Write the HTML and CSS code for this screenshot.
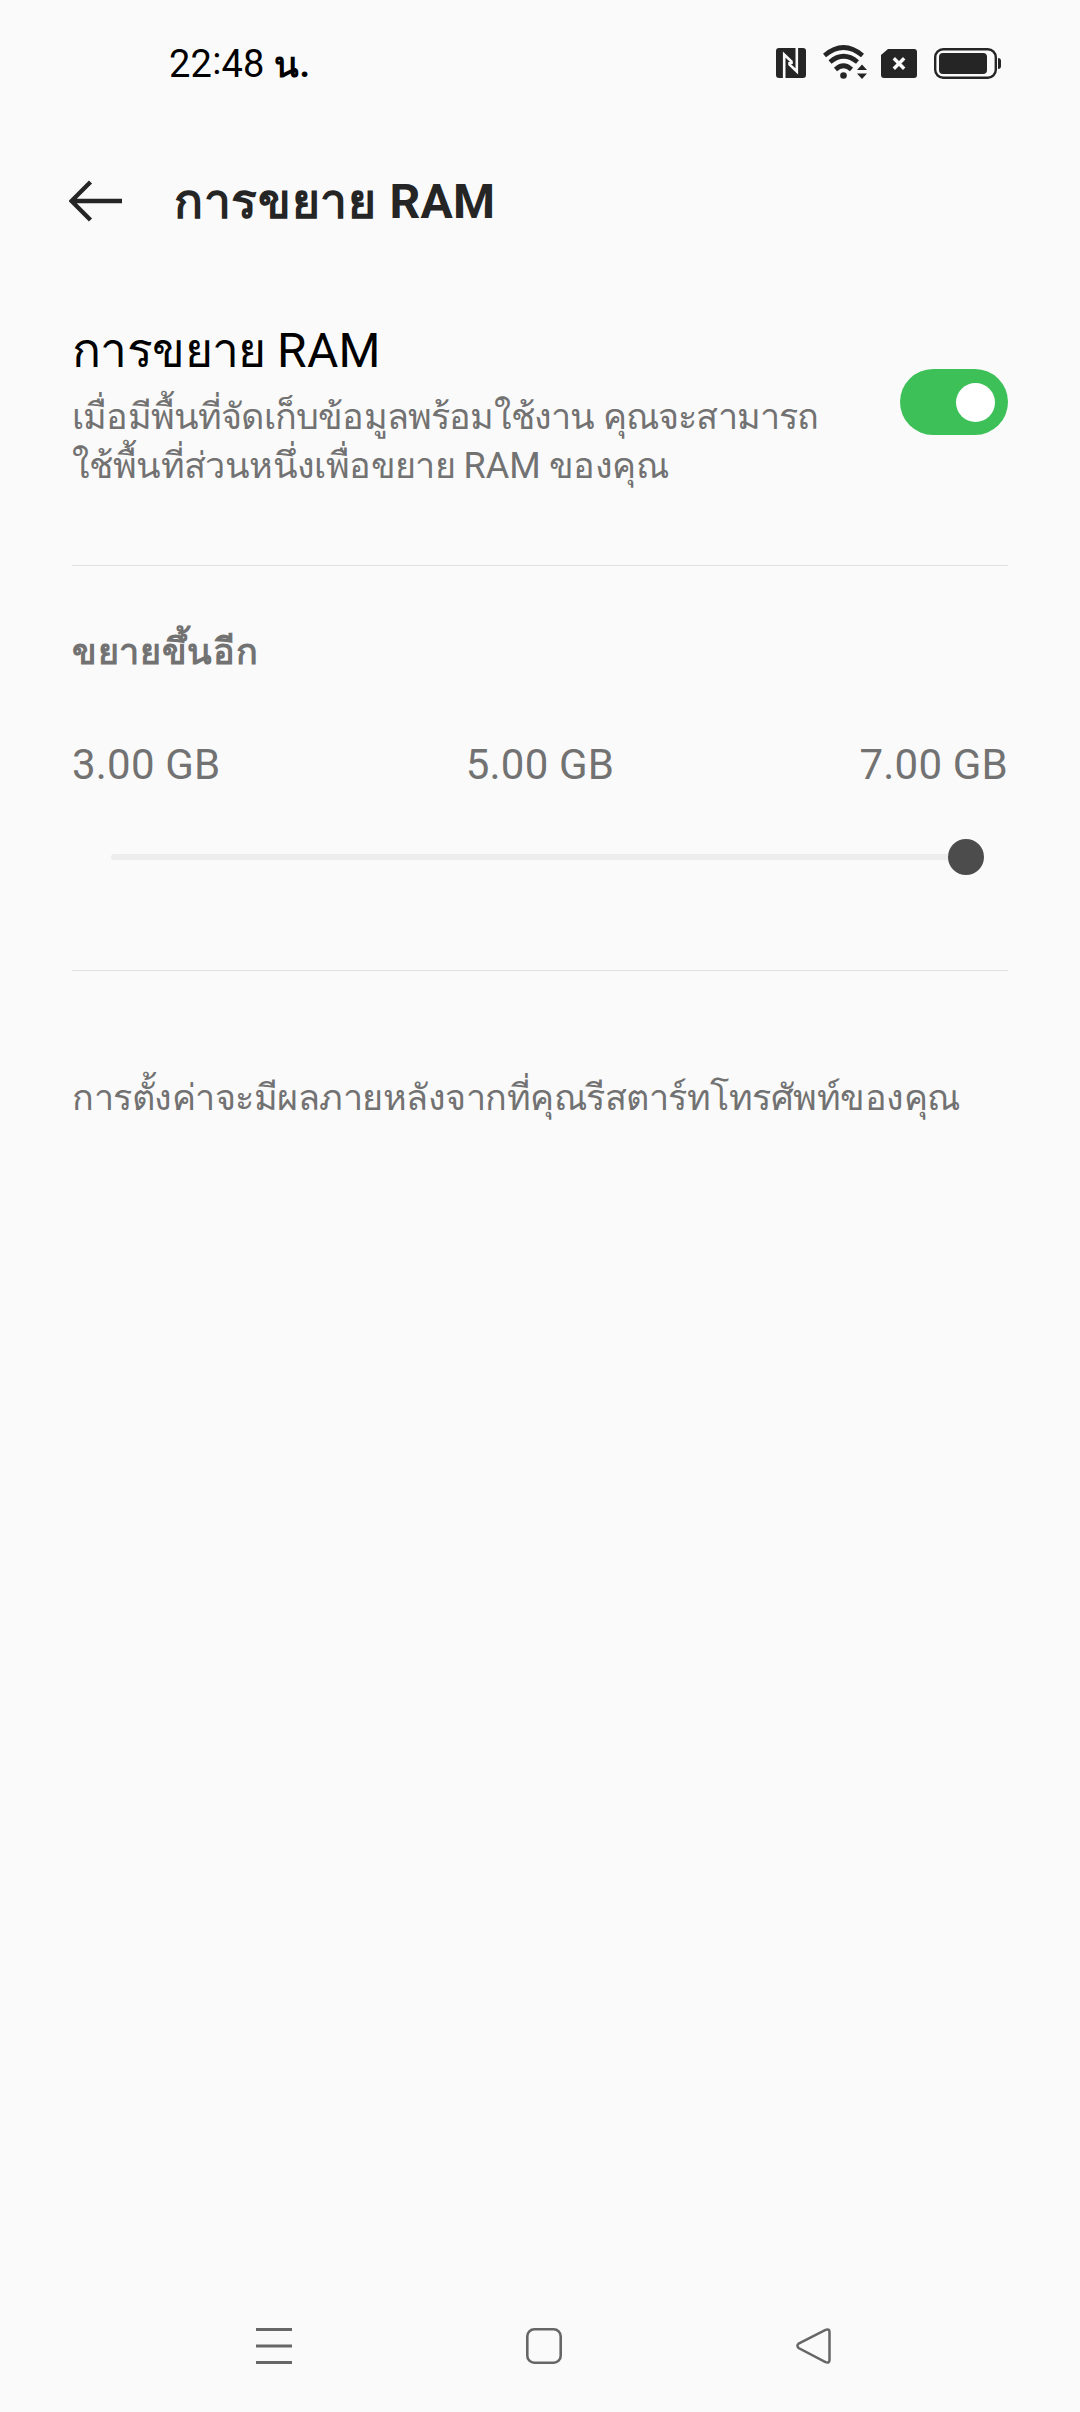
FILE: index.html
```html
<!DOCTYPE html>
<html lang="th">
<head>
  <meta charset="UTF-8">
  <meta name="viewport" content="width=device-width, initial-scale=1.0">
  <title>การขยาย RAM</title>
  <link rel="stylesheet" href="styles.css">
</head>
<body>
  <!-- Status bar -->
  <div class="status-bar">
    <div class="time">22<span class="colon">:</span>48 <span class="unit">น.</span></div>
    <div class="status-icons">
      <svg class="nfc" width="30" height="30" viewBox="0 0 30 30">
        <rect width="30" height="30" rx="3" fill="#252525"/>
        <path d="M8.200 30V6.500L15.500 13.500V16M20.800 0V23.500L13.500 16.500V14" fill="none" stroke="#fafafa" stroke-width="2.600"/>
      </svg>
      <svg class="wifi" width="44" height="34" viewBox="0 0 44 34">
        <g fill="none" stroke="#252525" stroke-width="4.600">
          <path d="M1.500 10.500Q20.500 -5.500 39.500 10.500"/>
          <path d="M7 17Q20.500 5.500 34.500 17"/>
          <path d="M12.500 24.500Q20.500 17 28.500 24.500"/>
        </g>
        <circle cx="20.500" cy="30.500" r="3.300" fill="#252525"/>
        <path d="M34 25L39 19.500L44 25ZM34 28.500H44L39 34Z" fill="#252525"/>
      </svg>
      <svg class="sim" width="36" height="29" viewBox="0 0 36 29">
        <path d="M7 0H33Q36 0 36 3V26Q36 29 33 29H3Q0 29 0 26V6Z" fill="#252525"/>
        <path d="M12.800 9.300L23.200 19.700M23.200 9.300L12.800 19.700" stroke="#fafafa" stroke-width="3.400"/>
      </svg>
      <svg class="battery" width="67" height="31" viewBox="0 0 67 31">
        <rect x="1.200" y="1.200" width="60.600" height="28.600" rx="8" fill="none" stroke="#252525" stroke-width="2.400"/>
        <rect x="5" y="5" width="48" height="21" rx="4" fill="#252525"/>
        <path d="M64 10Q67 10 67 13V18Q67 21 64 21Z" fill="#252525"/>
      </svg>
    </div>
  </div>

  <!-- Header -->
  <div class="header">
    <svg class="back" width="54" height="42" viewBox="0 0 54 42">
      <path d="M3 21H53M21.500 2L2.500 21L21.500 40" fill="none" stroke="#252525" stroke-width="4.400"/>
    </svg>
    <h1>การขยาย <span class="latin">RAM</span></h1>
  </div>

  <div class="content">
    <div class="setting">
      <div class="setting-text">
        <h2>การขยาย <span class="latin">RAM</span></h2>
        <p class="tight">เมื่อมีพื้นที่จัดเก็บข้อมูลพร้อมใช้งาน คุณจะสามารถ</p>
        <p>ใช้พื้นที่ส่วนหนึ่งเพื่อขยาย <span class="latin">RAM</span> ของคุณ</p>
      </div>
      <div class="toggle"><div class="knob"></div></div>
    </div>

    <div class="expand">
      <h3>ขยายขึ้นอีก</h3>
      <div class="labels">
        <span>3.00 GB</span>
        <span>5.00 GB</span>
        <span>7.00 GB</span>
      </div>
      <div class="slider">
        <div class="track"></div>
        <div class="thumb"></div>
      </div>
    </div>

    <p class="note">การตั้งค่าจะมีผลภายหลังจากที่คุณรีสตาร์ทโทรศัพท์ของคุณ</p>
  </div>

  <!-- Navigation bar -->
  <div class="nav-bar">
    <svg width="36" height="36" viewBox="0 0 36 36">
      <path d="M0 1.500H36M0 18H36M0 34.500H36" stroke="#666" stroke-width="3"/>
    </svg>
    <svg width="36" height="36" viewBox="0 0 36 36">
      <rect x="1.300" y="1.300" width="33.400" height="33.400" rx="7" fill="none" stroke="#666" stroke-width="2.600"/>
    </svg>
    <svg width="36" height="36" viewBox="0 0 36 36">
      <path d="M2.600 15.600L29.500 1.900Q33.500 0.500 33.500 4V32Q33.500 35.500 29.500 34.100L2.600 20Q0.200 17.800 2.600 15.600Z" fill="none" stroke="#666" stroke-width="2.500"/>
    </svg>
  </div>
</body>
</html>
```
FILE: styles.css
```css
* {
  box-sizing: border-box;
}

body {
  display: flex;
  flex-direction: column;
  height: 2412px;
  margin: 0;
  background-color: #fafafa;
  font-family: Roboto, sans-serif;
  color: #727272;
}

h1, h2, h3, p {
  margin: 0;
  white-space: nowrap;
}

svg {
  display: block;
}

.latin {
  letter-spacing: 0.2px;
}

.status-bar {
  display: flex;
  justify-content: space-between;
  align-items: center;
  height: 126px;
  padding: 0 79px 0 169px;
}

.time {
  padding-top: 3px;
  font-size: 38px;
  line-height: 50px;
  letter-spacing: 0.2px;
  color: #000;
}

.colon {
  vertical-align: 3px;
  line-height: 1;
}

.unit {
  font-weight: 700;
  font-size: 36px;
}

.status-icons {
  display: flex;
  align-items: center;
}

.wifi {
  margin: 0 14px 2px 17px;
}

.battery {
  margin-left: 17px;
}

.header {
  display: flex;
  align-items: center;
  height: 150px;
  padding-left: 69px;
  color: #252525;
}

.header h1 {
  margin-left: 51px;
  padding-top: 2px;
  font-size: 48px;
  line-height: 66px;
  letter-spacing: 0.7px;
}

.content {
  flex: 1;
  padding: 0 72px;
}

.setting {
  display: flex;
  justify-content: space-between;
  align-items: flex-start;
  height: 290px;
  padding-top: 42px;
  border-bottom: 1px solid #e2e2e2;
}

.setting h2 {
  margin-bottom: 9px;
  font-size: 48px;
  font-weight: 400;
  line-height: 66px;
  letter-spacing: -0.6px;
  color: #000;
}

.setting p {
  font-size: 36px;
  line-height: 49px;
  letter-spacing: -0.6px;
}

.setting .tight {
  letter-spacing: -0.82px;
}

.setting p .latin {
  letter-spacing: 0;
}

.toggle {
  display: flex;
  justify-content: flex-end;
  align-items: center;
  width: 108px;
  height: 66px;
  margin-top: 51px;
  padding-right: 13px;
  border-radius: 33px;
  background-color: #3dc058;
}

.knob {
  width: 39px;
  height: 39px;
  border-radius: 50%;
  background-color: #fff;
}

.expand {
  height: 405px;
  padding-top: 61px;
  border-bottom: 1px solid #e2e2e2;
}

.expand h3 {
  font-size: 36px;
  line-height: 50px;
  letter-spacing: 0.7px;
}

.labels {
  display: flex;
  justify-content: space-between;
  margin-top: 63px;
  font-size: 42px;
  line-height: 50px;
  letter-spacing: 0.2px;
}

.slider {
  display: flex;
  align-items: center;
  height: 36px;
  margin: 49px 24px 0 39px;
}

.track {
  flex: 1;
  height: 6px;
  border-radius: 3px 0 0 3px;
  background-color: #ededed;
}

.thumb {
  width: 36px;
  height: 36px;
  border-radius: 50%;
  background-color: #4c4c4c;
}

.note {
  margin-top: 102px;
  font-size: 36px;
  line-height: 50px;
  letter-spacing: -0.5px;
}

.nav-bar {
  display: flex;
  justify-content: space-between;
  height: 84px;
  padding: 0 248px 0 256px;
}
```
